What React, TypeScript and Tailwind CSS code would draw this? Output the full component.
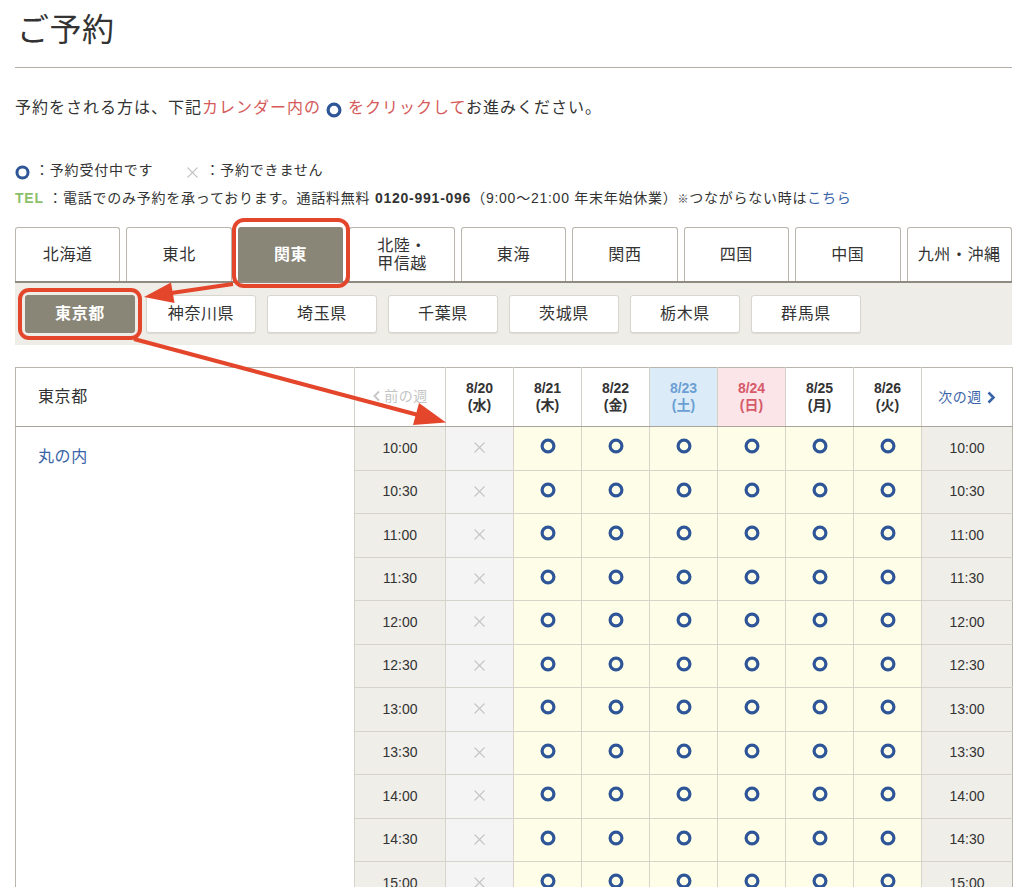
import React from "react";

const FONT = "font-['Liberation_Sans','Noto_Sans_CJK_JP',sans-serif]";

function Ring({ size = 15 }: { size?: number }) {
  return (
    <svg width={size} height={size} viewBox="0 0 16 16" className="inline-block">
      <circle cx="8" cy="8" r="5.9" fill="none" stroke="#2d5597" strokeWidth="3.2" />
    </svg>
  );
}

function Cross({ size = 14 }: { size?: number }) {
  return (
    <svg width={size} height={size} viewBox="0 0 14 14" className="inline-block">
      <path d="M2 2 L12 12 M12 2 L2 12" stroke="#c3c3c3" strokeWidth="1.4" strokeLinecap="round" />
    </svg>
  );
}

const regions = ["北海道", "東北", "関東", "北陸・\n甲信越", "東海", "関西", "四国", "中国", "九州・沖縄"];
const prefs = ["東京都", "神奈川県", "埼玉県", "千葉県", "茨城県", "栃木県", "群馬県"];
const days = [
  { d: "8/20", w: "水", kind: "normal" },
  { d: "8/21", w: "木", kind: "normal" },
  { d: "8/22", w: "金", kind: "normal" },
  { d: "8/23", w: "土", kind: "sat" },
  { d: "8/24", w: "日", kind: "sun" },
  { d: "8/25", w: "月", kind: "normal" },
  { d: "8/26", w: "火", kind: "normal" },
];
const times = ["10:00", "10:30", "11:00", "11:30", "12:00", "12:30", "13:00", "13:30", "14:00", "14:30", "15:00", "15:30", "16:00"];

export default function App() {
  return (
    <div className={`relative w-[1024px] h-[887px] overflow-hidden bg-white text-[#333] ${FONT}`}>
      <div className="px-[15px] w-[1024px]">
        <h1 className="pt-[10px] pl-[2px] text-[32px] leading-[40px] h-[67px] font-normal text-[#333] tracking-[0.5px]">ご予約</h1>
        <div className="h-px w-[997px] bg-[#b3afa6]" />

        <p className="mt-[28px] text-[16px] leading-[24px] tracking-[1px]">
          予約をされる方は、下記<span className="text-[#d55a5a]">カレンダー内の </span>
          <span className="relative top-[1px]"><Ring size={16} /></span>
          <span className="text-[#d55a5a]"> をクリックして</span>お進みください。
        </p>

        <div className="mt-[36px] text-[14px] leading-[28px] flex items-center tracking-[0.8px]">
          <span className="relative top-[1px] mr-[5px]"><Ring size={15} /></span>
          <span>：予約受付中です</span>
          <span className="ml-[33px] relative top-[1px] mr-[6px]"><Cross size={13} /></span>
          <span>：予約できません</span>
        </div>
        <div className="text-[14px] leading-[28px] tracking-[0.75px] whitespace-nowrap">
          <span className="text-[#8dbf6b] font-bold">TEL</span>
          <span> ：電話でのみ予約を承っております。通話料無料 </span>
          <span className="font-bold">0120-991-096</span>
          <span>（9:00〜21:00 年末年始休業）<span className="text-[11px]">※</span>つながらない時は</span>
          <span className="text-[#3a64a8]">こちら</span>
        </div>

        {/* Region tabs */}
        <div className="mt-[14px] w-[997px] flex gap-[6px] border-b-2 border-[#8f8b80]">
          {regions.map((r) => {
            const active = r === "関東";
            return (
              <div
                key={r}
                className={`flex-1 h-[54px] flex items-center justify-center text-center rounded-t-[3px] border border-b-0 whitespace-pre-line tracking-[0.6px] ${
                  active
                    ? "bg-[#8a8677] border-[#8a8677] text-white font-bold text-[16px]"
                    : "bg-white border-[#bab6ad] text-[#333] text-[16px]"
                } ${r.includes("\n") ? "leading-[18px]" : "leading-[24px]"}`}
              >
                {r}
              </div>
            );
          })}
        </div>

        {/* Prefecture row */}
        <div className="w-[997px] bg-[#efede7] pl-[10px] py-[12px] flex gap-[11px]">
          {prefs.map((p) => {
            const active = p === "東京都";
            return (
              <div
                key={p}
                className={`w-[110px] h-[38px] flex items-center justify-center rounded-[3px] text-[16px] tracking-[0.6px] ${
                  active
                    ? "bg-[#8a8677] text-white font-bold"
                    : "bg-white border border-[#d9d6ce] shadow-[0_1px_1px_rgba(0,0,0,0.08)]"
                }`}
              >
                {p}
              </div>
            );
          })}
        </div>

        {/* Calendar table */}
        <table className="mt-[22px] w-[997px] table-fixed border-collapse border border-[#b9b5ac]">
          <colgroup>
            <col className="w-[339px]" />
            <col className="w-[91px]" />
            {days.map((d) => (
              <col key={d.d} className="w-[68px]" />
            ))}
            <col className="w-[91px]" />
          </colgroup>
          <thead>
            <tr className="h-[59px]">
              <th className="border-b border-[#a9a59c] text-left pl-[22px] text-[16px] font-normal tracking-[0.6px]">東京都</th>
              <th className="border-b border-l border-[#a9a59c] border-l-[#d3d0c8] text-[14px] font-normal text-[#c5c5c5] tracking-[0.5px]">
                <span className="inline-flex items-center gap-[3px]">
                  <svg width="9" height="12" viewBox="0 0 9 12">
                    <path d="M7 1.5 L2.5 6 L7 10.5" fill="none" stroke="#c8c8c8" strokeWidth="2" />
                  </svg>
                  前の週
                </span>
              </th>
              {days.map((d) => {
                const bg = d.kind === "sat" ? "bg-[#dcebf8]" : d.kind === "sun" ? "bg-[#fbe5e9]" : "bg-white";
                const fg = d.kind === "sat" ? "text-[#6b9fd3]" : d.kind === "sun" ? "text-[#d65a6a]" : "text-[#333]";
                return (
                  <th key={d.d} className={`border-b border-l border-[#a9a59c] border-l-[#d3d0c8] ${bg} ${fg} text-[14px] font-bold leading-[17px]`}>
                    <div>{d.d}</div>
                    <div>({d.w})</div>
                  </th>
                );
              })}
              <th className="border-b border-l border-[#a9a59c] border-l-[#d3d0c8] text-[14px] font-normal text-[#3a64a8] tracking-[0.5px]">
                <span className="inline-flex items-center gap-[4px]">
                  次の週
                  <svg width="10" height="13" viewBox="0 0 10 13">
                    <path d="M2.5 1.5 L7.5 6.5 L2.5 11.5" fill="none" stroke="#3a64a8" strokeWidth="2.6" />
                  </svg>
                </span>
              </th>
            </tr>
          </thead>
          <tbody>
            {times.map((t, i) => (
              <tr key={t} className="h-[43.5px]">
                {i === 0 && (
                  <td rowSpan={times.length} className="align-top pl-[22px] pt-[18px] bg-white">
                    <span className="text-[16px] text-[#3a64a8] tracking-[0.6px]">丸の内</span>
                  </td>
                )}
                <td className="bg-[#f0eee9] border-l border-t border-[#d6d3cb] text-center text-[14px] text-[#333]">{t}</td>
                {days.map((d, j) => (
                  <td
                    key={d.d}
                    className={`border-l border-t border-[#d6d3cb] text-center ${j === 0 ? "bg-[#f4f4f4]" : "bg-[#fefee8]"}`}
                  >
                    <span className="inline-flex items-center justify-center relative top-[1px]">
                      {j === 0 ? <Cross size={13} /> : <Ring size={16} />}
                    </span>
                  </td>
                ))}
                <td className="bg-[#f0eee9] border-l border-t border-[#d6d3cb] text-center text-[14px] text-[#333]">{t}</td>
              </tr>
            ))}
          </tbody>
        </table>
      </div>

      {/* Red annotation overlay */}
      <svg className="absolute left-0 top-0 pointer-events-none" width="1024" height="887" viewBox="0 0 1024 887">
        <g fill="none" stroke="#e4462c" strokeWidth="4">
          <rect x="234" y="220" width="114" height="66" rx="10" />
          <rect x="20" y="290" width="120" height="48" rx="9" />
          <line x1="233" y1="284" x2="168" y2="293.5" />
          <line x1="134" y1="339" x2="420" y2="415.5" />
        </g>
        <g fill="#e4462c">
          <polygon points="144,297 171,282.5 174.5,303" />
          <polygon points="446,422.5 419,403 413,425" />
        </g>
      </svg>
    </div>
  );
}
